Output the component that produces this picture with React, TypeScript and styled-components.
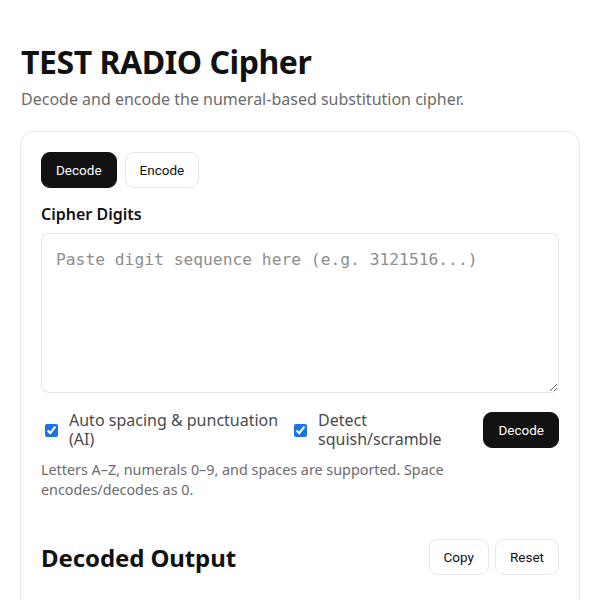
import React, { useState } from 'react';
import styled, { createGlobalStyle } from 'styled-components';

const GlobalStyle = createGlobalStyle`
  html, body {
    margin: 0;
    padding: 0;
    background: #ffffff;
  }
  body {
    font-family: "Noto Sans", "Open Sans", sans-serif;
    color: #111111;
  }
`;

const Page = styled.div`
  padding: 42px 20px 0 20px;
  width: 600px;
  box-sizing: border-box;
`;

const Title = styled.h1`
  font-size: 32px;
  font-weight: 700;
  line-height: 40px;
  margin: 0 0 5px 1px;
  letter-spacing: -0.45px;
`;

const Subtitle = styled.p`
  margin: 0 0 20px 1px;
  font-size: 16px;
  line-height: 24px;
  color: #6b6b6b;
`;

const Card = styled.section`
  border: 1px solid #e6e6e6;
  border-radius: 14px;
  padding: 20px;
  display: flex;
  flex-direction: column;
`;

const Tabs = styled.div`
  display: flex;
  gap: 8px;
  margin-bottom: 14px;
`;

const Button = styled.button<{ $dark?: boolean }>`
  height: 36px;
  padding: 0 14px;
  border-radius: 9px;
  font-family: Roboto, "Liberation Sans", sans-serif;
  font-size: 13.5px;
  cursor: pointer;
  border: 1px solid ${p => (p.$dark ? '#111111' : '#e6e6e6')};
  background: ${p => (p.$dark ? '#111111' : '#ffffff')};
  color: ${p => (p.$dark ? '#ffffff' : '#111111')};
`;

const Label = styled.label`
  display: block;
  font-size: 16px;
  font-weight: 600;
  line-height: 24px;
  margin-bottom: 7px;
`;

const Digits = styled.textarea`
  box-sizing: border-box;
  width: 100%;
  height: 160px;
  border: 1px solid #e3e3e3;
  border-radius: 9px;
  padding: 14px 14px;
  font-family: "DejaVu Sans Mono", "Liberation Mono", monospace;
  font-size: 16.3px;
  line-height: 24px;
  color: #111111;
  resize: vertical;
  outline: none;
  &::placeholder {
    color: #8e8e8e;
  }
`;

const OptionsRow = styled.div`
  display: flex;
  align-items: center;
  gap: 4px;
  margin-top: 18px;
`;

const Option = styled.label<{ $basis?: string }>`
  display: flex;
  align-items: center;
  gap: 8px;
  flex: ${p => (p.$basis ? `0 0 ${p.$basis}` : '1 1 auto')};
  font-size: 16px;
  line-height: 19px;
  color: #4a4a4a;
`;

const Check = styled.input`
  flex-shrink: 0;
  accent-color: #1a73e8;
`;

const RunButton = styled(Button)`
  margin-left: auto;
  flex-shrink: 0;
`;

const Hint = styled.p`
  margin: 11px 0 0 0;
  font-size: 14.35px;
  line-height: 20px;
  color: #6b6b6b;
  max-width: 470px;
`;

const OutputHeader = styled.div`
  display: flex;
  align-items: center;
  justify-content: space-between;
  margin-top: 39px;
`;

const OutputTitle = styled.h2`
  margin: 0;
  font-size: 24px;
  font-weight: 700;
  letter-spacing: -0.1px;
`;

const Actions = styled.div`
  display: flex;
  gap: 6px;
`;

const OutputBox = styled.div`
  margin-top: 28px;
  min-height: 140px;
  border: 1px solid #e3e3e3;
  border-radius: 9px;
  padding: 14px;
  font-family: "DejaVu Sans Mono", "Liberation Mono", monospace;
  font-size: 16px;
  color: #111111;
`;

export default function App() {
  const [mode, setMode] = useState<'decode' | 'encode'>('decode');
  const [auto, setAuto] = useState(true);
  const [detect, setDetect] = useState(true);
  const [text, setText] = useState('');

  return (
    <>
      <GlobalStyle />
      <Page>
        <Title>TEST RADIO Cipher</Title>
        <Subtitle>Decode and encode the numeral-based substitution cipher.</Subtitle>
        <Card>
          <Tabs>
            <Button $dark={mode === 'decode'} onClick={() => setMode('decode')}>Decode</Button>
            <Button $dark={mode === 'encode'} onClick={() => setMode('encode')}>Encode</Button>
          </Tabs>
          <Label htmlFor="digits">Cipher Digits</Label>
          <Digits
            id="digits"
            value={text}
            onChange={e => setText(e.target.value)}
            placeholder="Paste digit sequence here (e.g. 3121516...)"
          />
          <OptionsRow>
            <Option $basis="245px">
              <Check type="checkbox" checked={auto} onChange={() => setAuto(!auto)} />
              Auto spacing &amp; punctuation (AI)
            </Option>
            <Option>
              <Check type="checkbox" checked={detect} onChange={() => setDetect(!detect)} />
              Detect squish/scramble
            </Option>
            <RunButton $dark>Decode</RunButton>
          </OptionsRow>
          <Hint>
            Letters A–Z, numerals 0–9, and spaces are supported. Space encodes/decodes as 0.
          </Hint>
          <OutputHeader>
            <OutputTitle>Decoded Output</OutputTitle>
            <Actions>
              <Button>Copy</Button>
              <Button onClick={() => setText('')}>Reset</Button>
            </Actions>
          </OutputHeader>
          <OutputBox />
        </Card>
      </Page>
    </>
  );
}
